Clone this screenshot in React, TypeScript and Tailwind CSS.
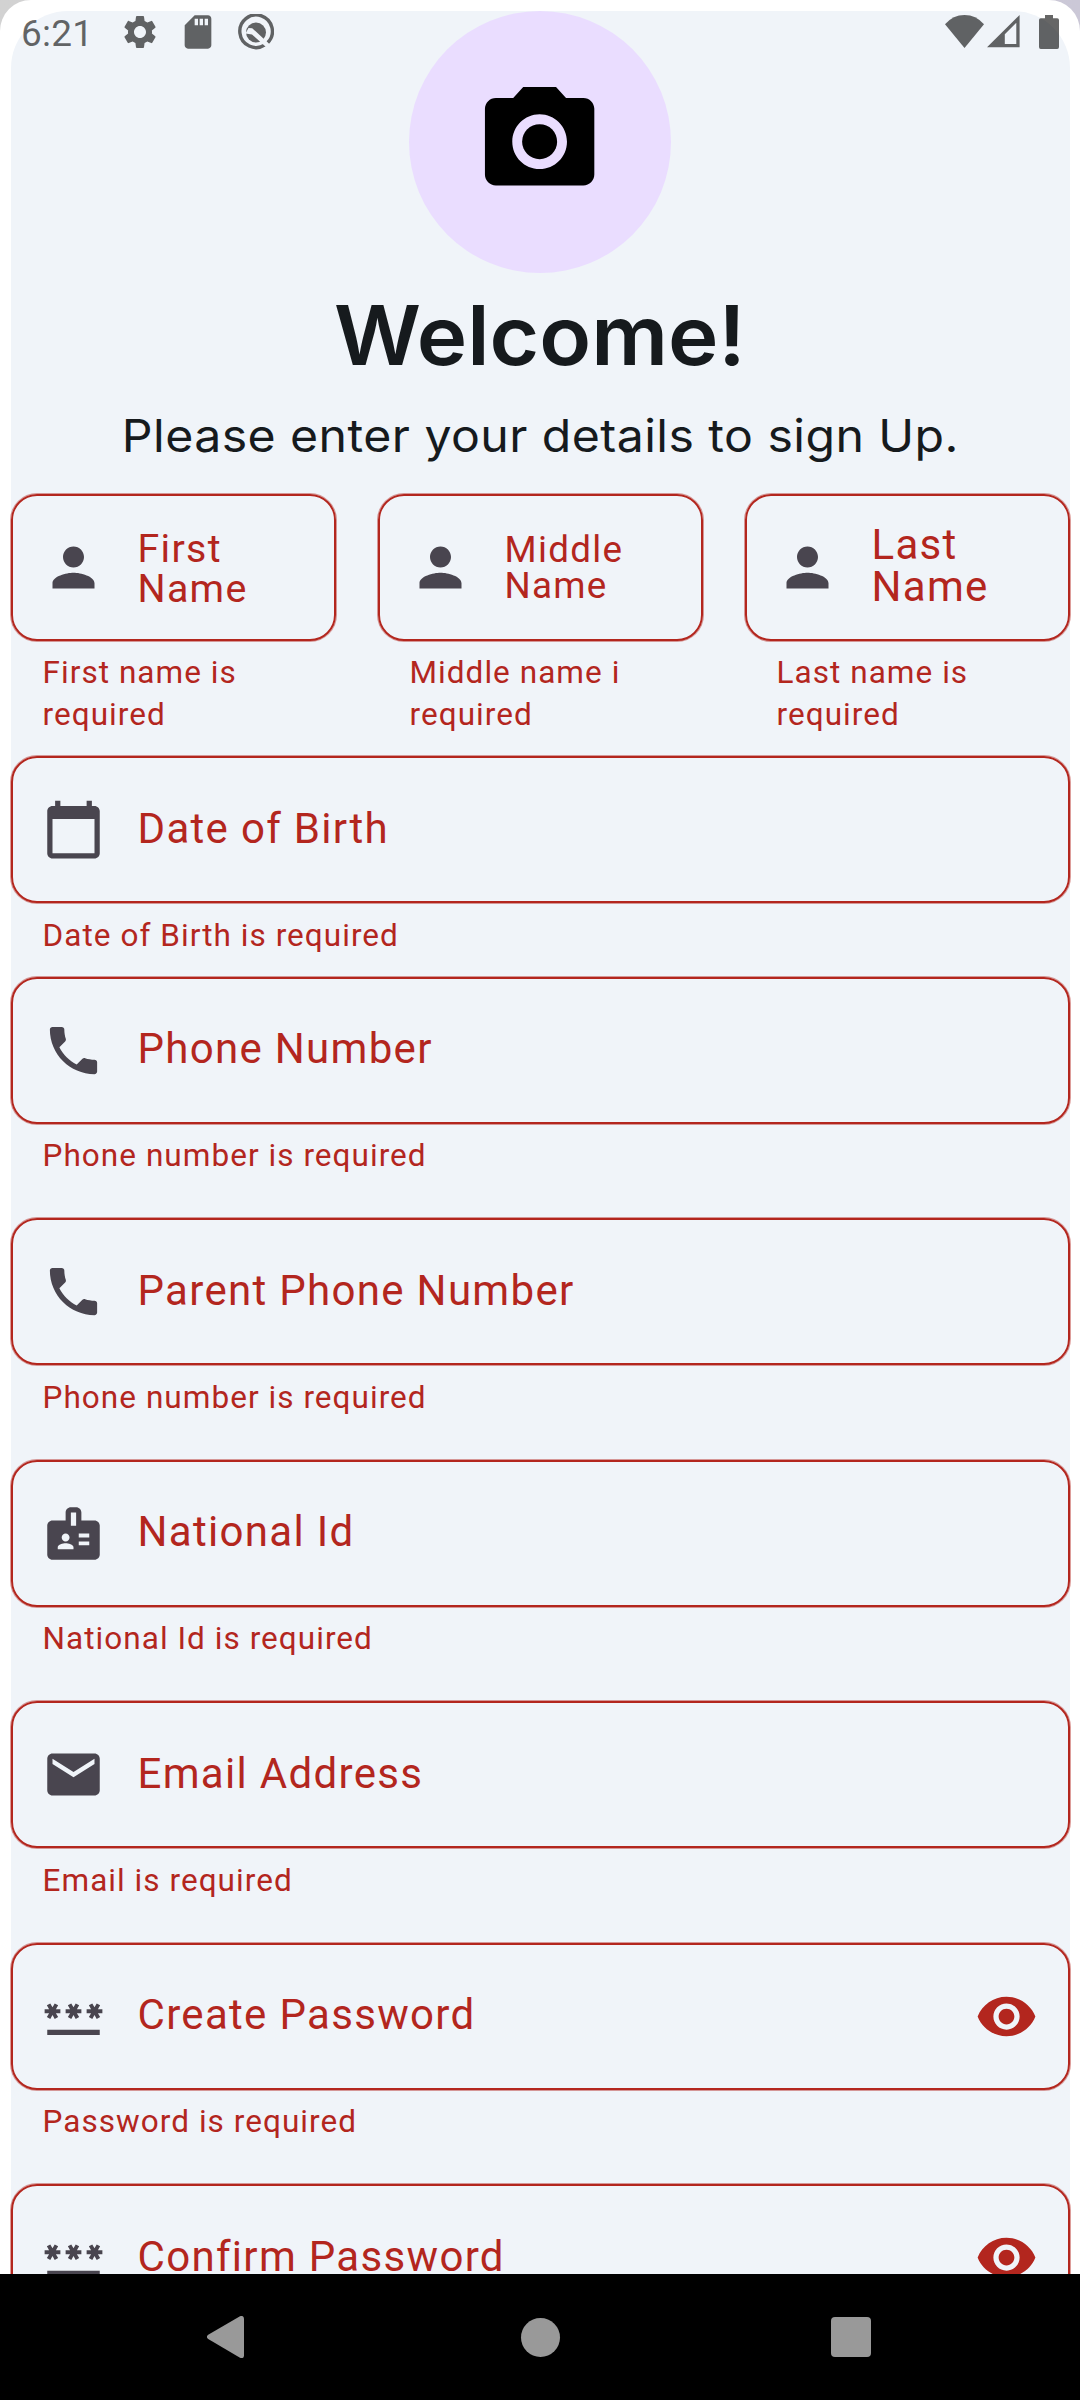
import type { ReactNode } from "react";
import type { IconType } from "react-icons";
import {
  MdBadge,
  MdCalendarToday,
  MdEmail,
  MdPassword,
  MdPerson,
  MdPhone,
  MdPhotoCamera,
  MdSdCard,
  MdSettings,
  MdVisibility,
} from "react-icons/md";

interface FieldProps {
  icon: IconType;
  label: ReactNode;
  error?: ReactNode;
  labelClass?: string;
  obscured?: boolean;
}

function Field({
  icon: Icon,
  label,
  error,
  labelClass = "text-[42px] leading-none -translate-y-px",
  obscured = false,
}: FieldProps) {
  return (
    <div className="text-[#b3261e]">
      <div className="flex h-[147px] items-center rounded-[26px] border-2 border-[#b3261e] px-[29.5px] shadow-[0_0_0_1px_rgba(179,38,30,0.45)]">
        <Icon className="size-[63px] shrink-0 text-[#49454f]" />
        <div className={`ml-[32.5px] flex-1 tracking-[1.3125px] ${labelClass}`}>{label}</div>
        {obscured && <MdVisibility className="size-[63px] shrink-0" />}
      </div>
      {error && (
        <div className="mt-[10.5px] translate-y-px pl-[32px] text-[31.5px] leading-[42px] tracking-[1.05px] whitespace-nowrap">
          {error}
        </div>
      )}
    </div>
  );
}

function TwoLines({ first, second }: { first: string; second: string }) {
  return (
    <>
      {first}
      <br />
      {second}
    </>
  );
}

function StatusBar() {
  return (
    <div className="absolute inset-x-0 top-0 flex h-[63px] items-center text-black/60">
      <span className="ml-[21px] w-[98.5px] text-[37px] leading-none tracking-[0.2px] translate-y-[2px]">6:21</span>
      <MdSettings className="size-[40px]" />
      <MdSdCard className="ml-[18px] size-[40px]" />
      <svg className="ml-[20px] size-[36px] text-[#606264]" viewBox="0 0 36 36" fill="none">
        <path d="M27 30.9A16.3 16.3 0 1 1 29.6 28.8" stroke="currentColor" strokeWidth="3.4" />
        <circle cx="18" cy="18.5" r="10" fill="currentColor" />
        <path d="M7.5 19.5L10.5 14L14.2 14.2L31 29.8L28 33L14 20.5Z" fill="#f0f4f9" />
      </svg>
      <svg className="ml-auto h-[33px] w-[39px]" viewBox="0 0 39 33" fill="currentColor">
        <path d="M0 9.3Q8 0 19.5 0T39 9.3L19.5 33Z" />
      </svg>
      <svg className="ml-[3.5px] h-[33px] w-[33px]" viewBox="0 0 33 33" fill="currentColor" fillRule="evenodd">
        <path d="M0 32.3L32.6 0V32.3ZM17.8 29H29.3V7.8L17.8 19.2Z" />
      </svg>
      <svg className="mr-[21px] ml-[19px] h-[34px] w-[20px]" viewBox="0 0 20 34" fill="currentColor">
        <path d="M6 0h8v3.3h4.2q1.8 0 1.8 1.8v27q0 1.9-1.8 1.9H1.8Q0 34 0 32.1V5.1Q0 3.3 1.8 3.3H6Z" />
      </svg>
    </div>
  );
}

function NavigationBar() {
  return (
    <nav className="flex h-[126px] items-center justify-center gap-[270px] bg-black text-[#999999]">
      <svg className="size-[42px]" viewBox="0 0 42 42" fill="currentColor">
        <path d="M1.2 18.7L33 .2Q37-1 37 3V39.5Q37 43 33 41.8L1.2 23Q-1.4 21 1.2 18.7Z" />
      </svg>
      <div className="flex w-[42px] justify-center">
        <div className="size-[39px] rounded-full bg-current" />
      </div>
      <div className="w-[42px]">
        <div className="size-[40px] rounded-[4px] bg-current" />
      </div>
    </nav>
  );
}

export default function App() {
  return (
    <div className="relative flex h-[2400px] w-[1080px] flex-col overflow-hidden bg-linear-to-r from-[#d2d2d2] to-[#cbc8d7] [font-family:Roboto,sans-serif]">
      <main className="h-[2274px] overflow-hidden rounded-t-[31px] bg-white px-[10.5px] pt-[10.5px]">
        <div className="h-[2400px] rounded-t-[57px] bg-[#f0f4f9]">
          <header className="flex h-[483px] flex-col items-center text-[#161a1d]">
            <div className="flex size-[262.5px] shrink-0 items-center justify-center rounded-full bg-[#eaddff]">
              <MdPhotoCamera className="size-[131.25px] text-black" />
            </div>
            <h1 className="mt-[10.5px] scale-x-[1.04] text-[82px] leading-[104px] font-semibold [font-family:Inter,sans-serif]">
              Welcome!
            </h1>
            <p className="mt-[18px] translate-x-[0.5px] scale-x-[1.06] text-[45.5px] leading-[59px] tracking-[0.4px] whitespace-nowrap [font-family:Inter,sans-serif]">
              Please enter your details to sign Up.
            </p>
          </header>
          <div className="flex flex-col gap-[42px]">
            <div className="flex flex-col gap-[21px]">
              <div className="grid grid-cols-3 gap-[42px]">
                <Field
                  icon={MdPerson}
                  label={<TwoLines first="First" second="Name" />}
                  error={<TwoLines first="First name is" second="required" />}
                  labelClass="text-[39.375px] leading-[40px] translate-y-[1.5px]"
                />
                <Field
                  icon={MdPerson}
                  label={<TwoLines first="Middle" second="Name" />}
                  error={<TwoLines first="Middle name i" second="required" />}
                  labelClass="text-[36.75px] leading-[36px] translate-y-px"
                />
                <Field
                  icon={MdPerson}
                  label={<TwoLines first="Last" second="Name" />}
                  error={<TwoLines first="Last name is" second="required" />}
                  labelClass="text-[42px] leading-none -translate-y-px"
                />
              </div>
              <Field icon={MdCalendarToday} label="Date of Birth" error="Date of Birth is required" />
              <Field icon={MdPhone} label="Phone Number" error="Phone number is required" />
            </div>
            <Field icon={MdPhone} label="Parent Phone Number" error="Phone number is required" />
            <Field icon={MdBadge} label="National Id" error="National Id is required" />
            <Field icon={MdEmail} label="Email Address" error="Email is required" />
            <Field icon={MdPassword} label="Create Password" error="Password is required" obscured />
            <Field icon={MdPassword} label="Confirm Password" obscured />
          </div>
        </div>
      </main>
      <StatusBar />
      <NavigationBar />
    </div>
  );
}
